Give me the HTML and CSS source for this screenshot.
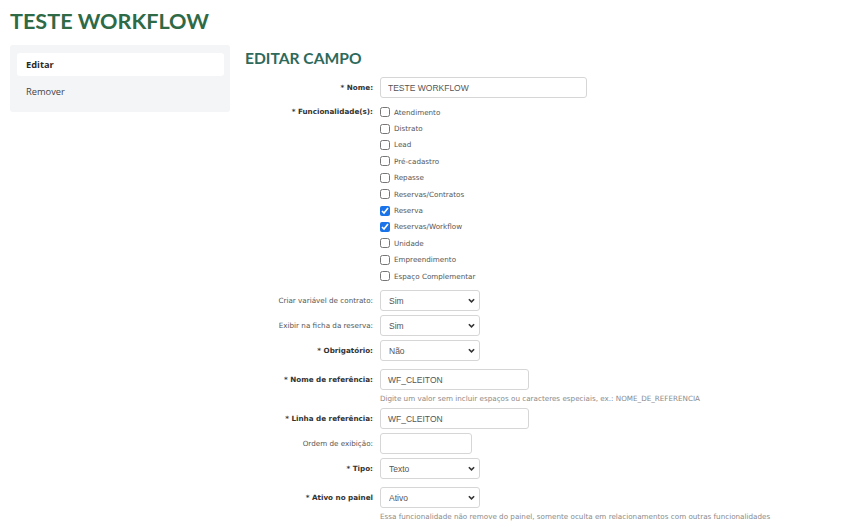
FILE: index.html
```html
<!DOCTYPE html>
<html lang="pt-BR">
<head>
<meta charset="utf-8">
<title>Teste Workflow</title>
<link rel="stylesheet" href="styles.css">
</head>
<body>
<div class="page">
  <h1 class="page-title">TESTE WORKFLOW</h1>
  <div class="layout">
    <nav class="sidebar">
      <div class="side-item active">Editar</div>
      <div class="side-item">Remover</div>
    </nav>
    <main class="main">
      <h2 class="section-title">EDITAR CAMPO</h2>
      <div class="form">
        <label class="lbl req">* Nome:</label>
        <input class="txt txt-wide" type="text" value="TESTE WORKFLOW">

        <label class="lbl req lbl-top">* Funcionalidade(s):</label>
        <div class="checks">
          <label class="chk"><input type="checkbox"><span>Atendimento</span></label>
          <label class="chk"><input type="checkbox"><span>Distrato</span></label>
          <label class="chk"><input type="checkbox"><span>Lead</span></label>
          <label class="chk"><input type="checkbox"><span>Pré-cadastro</span></label>
          <label class="chk"><input type="checkbox"><span>Repasse</span></label>
          <label class="chk"><input type="checkbox"><span>Reservas/Contratos</span></label>
          <label class="chk"><input type="checkbox" checked><span>Reserva</span></label>
          <label class="chk"><input type="checkbox" checked><span>Reservas/Workflow</span></label>
          <label class="chk"><input type="checkbox"><span>Unidade</span></label>
          <label class="chk"><input type="checkbox"><span>Empreendimento</span></label>
          <label class="chk"><input type="checkbox"><span>Espaço Complementar</span></label>
        </div>

        <label class="lbl">Criar variável de contrato:</label>
        <div class="sel"><select><option>Sim</option><option>Não</option></select><svg class="chev" viewBox="0 0 8 5" width="7" height="5"><path d="M1 1l3 3 3-3" fill="none" stroke="#333" stroke-width="1.8"/></svg></div>

        <label class="lbl">Exibir na ficha da reserva:</label>
        <div class="sel"><select><option>Sim</option><option>Não</option></select><svg class="chev" viewBox="0 0 8 5" width="7" height="5"><path d="M1 1l3 3 3-3" fill="none" stroke="#333" stroke-width="1.8"/></svg></div>

        <label class="lbl req">* Obrigatório:</label>
        <div class="sel"><select><option>Não</option><option>Sim</option></select><svg class="chev" viewBox="0 0 8 5" width="7" height="5"><path d="M1 1l3 3 3-3" fill="none" stroke="#333" stroke-width="1.8"/></svg></div>

        <label class="lbl req spaced">* Nome de referência:</label>
        <input class="txt txt-mid spaced" type="text" value="WF_CLEITON">

        <div class="help">Digite um valor sem incluir espaços ou caracteres especiais, ex.: NOME_DE_REFERENCIA</div>

        <label class="lbl req">* Linha de referência:</label>
        <input class="txt txt-mid" type="text" value="WF_CLEITON">

        <label class="lbl">Ordem de exibição:</label>
        <input class="txt txt-small" type="text" value="">

        <label class="lbl req">* Tipo:</label>
        <div class="sel"><select><option>Texto</option></select><svg class="chev" viewBox="0 0 8 5" width="7" height="5"><path d="M1 1l3 3 3-3" fill="none" stroke="#333" stroke-width="1.8"/></svg></div>

        <label class="lbl req spaced">* Ativo no painel</label>
        <div class="sel spaced"><select><option>Ativo</option><option>Inativo</option></select><svg class="chev" viewBox="0 0 8 5" width="7" height="5"><path d="M1 1l3 3 3-3" fill="none" stroke="#333" stroke-width="1.8"/></svg></div>

        <div class="help">Essa funcionalidade não remove do painel, somente oculta em relacionamentos com outras funcionalidades</div>
      </div>
    </main>
  </div>
</div>
</body>
</html>
```
FILE: styles.css
```css
html, body {
  margin: 0;
  padding: 0;
  background: #ffffff;
}
.page {
  padding: 8px 0 0 10px;
}
.page-title {
  margin: 0;
  font-family: Lato, "Liberation Sans", sans-serif;
  font-weight: 700;
  font-size: 21.6px;
  line-height: 27px;
  color: #2f6a47;
}
.layout {
  display: flex;
  align-items: flex-start;
  gap: 15px;
  margin-top: 10px;
}
.sidebar {
  width: 220px;
  box-sizing: border-box;
  background: #f4f5f7;
  border-radius: 3px;
  padding: 8px 6px 9px 7px;
  display: flex;
  flex-direction: column;
  gap: 4px;
}
.side-item {
  height: 23px;
  line-height: 23px;
  padding-left: 9px;
  font-family: "Open Sans", "Liberation Sans", sans-serif;
  font-size: 9.3px;
  color: #444;
  border-radius: 3px;
}
.side-item.active {
  background: #ffffff;
  font-weight: 700;
  color: #2a2a2a;
}
.main {
  padding-top: 4px;
}
.section-title {
  margin: 0;
  font-family: Lato, "Liberation Sans", sans-serif;
  font-weight: 700;
  font-size: 15.6px;
  line-height: 19px;
  color: #2e6a5c;
}
.form {
  display: grid;
  grid-template-columns: 128px max-content;
  column-gap: 7px;
  row-gap: 4px;
  align-items: center;
  margin-top: 9px;
  font-family: "DejaVu Sans", Verdana, sans-serif;
  font-size: 7.2px;
}
.lbl {
  grid-column: 1;
  text-align: right;
  color: #555;
  white-space: nowrap;
}
.lbl.req {
  font-weight: 700;
  color: #333;
}
.lbl-top {
  align-self: start;
  line-height: 16.4px;
  padding-top: 2px;
}
.spaced {
  margin-top: 4px;
}
.txt {
  grid-column: 2;
  box-sizing: border-box;
  height: 21px;
  border: 1px solid #d6d6d6;
  border-radius: 3px;
  padding: 0 7px;
  font-family: "Liberation Sans", Arial, sans-serif;
  font-size: 8.5px;
  color: #555;
  background: #fff;
  outline: none;
}
.txt-wide { width: 207px; }
.txt-mid { width: 149px; }
.txt-small { width: 92px; }
.checks {
  grid-column: 2;
  padding: 2px 0;
  display: flex;
  flex-direction: column;
}
.chk {
  height: 16.4px;
  display: flex;
  align-items: center;
  gap: 4px;
  color: #555;
}
.chk input {
  margin: 0;
  width: 10px;
  height: 10px;
  accent-color: #1a73e8;
}
.sel {
  grid-column: 2;
  position: relative;
  width: 100px;
  height: 21px;
}
.sel select {
  appearance: none;
  -webkit-appearance: none;
  box-sizing: border-box;
  width: 100%;
  height: 21px;
  border: 1px solid #d6d6d6;
  border-radius: 3px;
  padding: 0 0 0 8px;
  margin: 0;
  background: #fff;
  font-family: "Liberation Sans", Arial, sans-serif;
  font-size: 8.5px;
  color: #555;
  outline: none;
}
.chev {
  position: absolute;
  right: 5px;
  top: 8px;
  pointer-events: none;
}
.help {
  grid-column: 2;
  height: 10px;
  line-height: 10px;
  color: #8a8a8a;
  white-space: nowrap;
}
```
